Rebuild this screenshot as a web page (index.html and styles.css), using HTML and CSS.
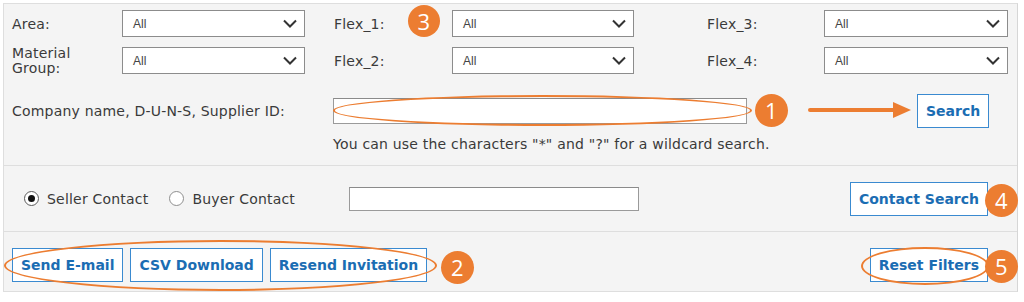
FILE: index.html
```html
<!DOCTYPE html>
<html lang="en">
<head>
  <meta charset="UTF-8">
  <meta name="viewport" content="width=device-width, initial-scale=1.0">
  <title>Supplier Search</title>
  <link rel="stylesheet" href="styles.css">
</head>
<body>
  <div class="page">
    <div class="panel">
      <div class="section filters">
        <div class="grid">
          <label class="lbl">Area:</label>
          <div class="select"><span>All</span><svg viewBox="0 0 14 9"><path d="M1 1.5 L7 7.5 L13 1.5"/></svg></div>
          <label class="lbl mid">Flex_1:</label>
          <div class="select"><span>All</span><svg viewBox="0 0 14 9"><path d="M1 1.5 L7 7.5 L13 1.5"/></svg></div>
          <label class="lbl far">Flex_3:</label>
          <div class="select"><span>All</span><svg viewBox="0 0 14 9"><path d="M1 1.5 L7 7.5 L13 1.5"/></svg></div>

          <label class="lbl two">Material<br>Group:</label>
          <div class="select"><span>All</span><svg viewBox="0 0 14 9"><path d="M1 1.5 L7 7.5 L13 1.5"/></svg></div>
          <label class="lbl mid">Flex_2:</label>
          <div class="select"><span>All</span><svg viewBox="0 0 14 9"><path d="M1 1.5 L7 7.5 L13 1.5"/></svg></div>
          <label class="lbl far">Flex_4:</label>
          <div class="select"><span>All</span><svg viewBox="0 0 14 9"><path d="M1 1.5 L7 7.5 L13 1.5"/></svg></div>
        </div>

        <div class="company-row">
          <label class="company-lbl">Company name, D-U-N-S, Supplier ID:</label>
          <input type="text" class="text-input company-input">
          <button class="btn search-btn">Search</button>
        </div>
        <p class="hint">You can use the characters "*" and "?" for a wildcard search.</p>
      </div>

      <div class="section contacts">
        <div class="radios">
          <span class="radio checked"></span><span class="radio-text">Seller Contact</span>
          <span class="radio"></span><span class="radio-text">Buyer Contact</span>
        </div>
        <input type="text" class="text-input contact-input">
        <button class="btn push-right">Contact Search</button>
      </div>

      <div class="section actions">
        <button class="btn">Send E-mail</button>
        <button class="btn">CSV Download</button>
        <button class="btn">Resend Invitation</button>
        <button class="btn push-right">Reset Filters</button>
      </div>
    </div>

    <!-- callouts -->
    <div class="ring ring-company"></div>
    <div class="ring ring-actions"></div>
    <div class="ring ring-reset"></div>
    <svg class="arrow" viewBox="0 0 105 20"><line x1="3" y1="10" x2="90" y2="10"/><polygon points="86,2 104,10 86,18"/></svg>
    <div class="num n1">1</div>
    <div class="num n2">2</div>
    <div class="num n3">3</div>
    <div class="num n4">4</div>
    <div class="num n5">5</div>
  </div>
</body>
</html>
```

FILE: styles.css
```css
body {
  margin: 0;
  background: #fff;
  font-family: "DejaVu Sans", Verdana, sans-serif;
  font-size: 14px;
  letter-spacing: 0.2px;
  color: #3a3a3a;
}
.page {
  position: relative;
  width: 1024px;
  height: 302px;
}
.panel {
  position: relative;
  top: 3px;
  margin-left: 3px;
  width: 1013px;
  border: 1px solid #dedede;
  border-right-color: #d6d6d6;
  background: #f4f4f4;
}
.section {
  border-bottom: 1px solid #dedede;
}
.section:last-child {
  border-bottom: none;
}

/* filters */
.filters {
  height: 162px;
  padding: 6px 0 0 8px;
  box-sizing: border-box;
}
.grid {
  display: grid;
  grid-template-columns: 110px 183px 147px 182px 190px 184px;
  grid-auto-rows: 27px;
  row-gap: 10px;
  align-items: center;
}
.lbl.mid {
  padding-left: 29px;
}
.lbl.far {
  padding-left: 73px;
}
.lbl.two {
  line-height: 15px;
  padding-top: 1px;
}
.select {
  height: 27px;
  box-sizing: border-box;
  border: 1px solid #8c8c8c;
  background: #fff;
  display: flex;
  align-items: center;
  justify-content: space-between;
  padding: 0 7px 0 10px;
  font-family: "Liberation Sans", Arial, sans-serif;
  font-size: 12px;
  letter-spacing: 0;
  color: #444;
}
.select svg {
  width: 14px;
  height: 9px;
  fill: none;
  stroke: #333;
  stroke-width: 2;
}

.company-row {
  display: flex;
  align-items: center;
  margin-top: 20px;
  height: 33px;
}
.company-lbl {
  width: 321px;
}
.text-input {
  height: 26px;
  box-sizing: border-box;
  border: 1px solid #9a9a9a;
  border-top-color: #8a8a8a;
  background: #fff;
  margin: 0;
  padding: 0 4px;
}
.company-input {
  width: 414px;
}
.search-btn {
  margin-left: 170px;
}
.hint {
  margin: 9px 0 0 321px;
  line-height: 16px;
}

/* contacts */
.contacts {
  height: 65px;
  display: flex;
  align-items: center;
  padding: 0 29px 0 20px;
}
.radios {
  width: 325px;
  display: flex;
  align-items: center;
}
.radio {
  width: 15px;
  height: 15px;
  box-sizing: border-box;
  border: 1px solid #8e8e8e;
  border-radius: 50%;
  background: #fff;
  display: inline-flex;
  align-items: center;
  justify-content: center;
  margin-right: 8px;
}
.radio.checked {
  border-color: #5a5a5a;
}
.radio.checked::after {
  content: "";
  width: 7px;
  height: 7px;
  border-radius: 50%;
  background: #111;
}
.radio-text {
  margin-right: 21px;
}
.contact-input {
  width: 290px;
  height: 24px;
}

/* buttons */
.btn {
  height: 34px;
  box-sizing: border-box;
  border: 1.5px solid #3a8ad0;
  background: #fff;
  color: #1b6db3;
  font-family: "DejaVu Sans", Verdana, sans-serif;
  font-weight: bold;
  font-size: 14px;
  letter-spacing: 0;
  padding: 0 8px;
  cursor: pointer;
}
.push-right {
  margin-left: auto;
}
.actions {
  height: 59px;
  display: flex;
  align-items: flex-start;
  gap: 7px;
  padding: 16px 29px 0 8px;
  box-sizing: border-box;
}

/* callouts */
.ring {
  position: absolute;
  border: 2px solid #ec7d31;
  border-radius: 50%;
  box-sizing: border-box;
}
.ring-company {
  left: 333px;
  top: 95px;
  width: 419px;
  height: 31px;
}
.ring-actions {
  left: 4px;
  top: 240px;
  width: 433px;
  height: 51px;
}
.ring-reset {
  left: 861px;
  top: 247px;
  width: 128px;
  height: 38px;
}
.arrow {
  position: absolute;
  left: 807px;
  top: 100px;
  width: 105px;
  height: 20px;
}
.arrow line {
  stroke: #ec7d31;
  stroke-width: 4;
  stroke-linecap: round;
}
.arrow polygon {
  fill: #ec7d31;
}
.num {
  position: absolute;
  width: 33px;
  height: 33px;
  border-radius: 50%;
  background: #ec7d31;
  color: #fff;
  font-family: "Open Sans", sans-serif;
  font-size: 22px;
  line-height: 33px;
  text-align: center;
}
.n1 { left: 755px; top: 94px; }
.n2 { left: 441px; top: 251px; }
.n3 { left: 408px; top: 5px; width: 32px; height: 32px; line-height: 32px; }
.n4 { left: 985px; top: 184px; }
.n5 { left: 985px; top: 250px; }
```
